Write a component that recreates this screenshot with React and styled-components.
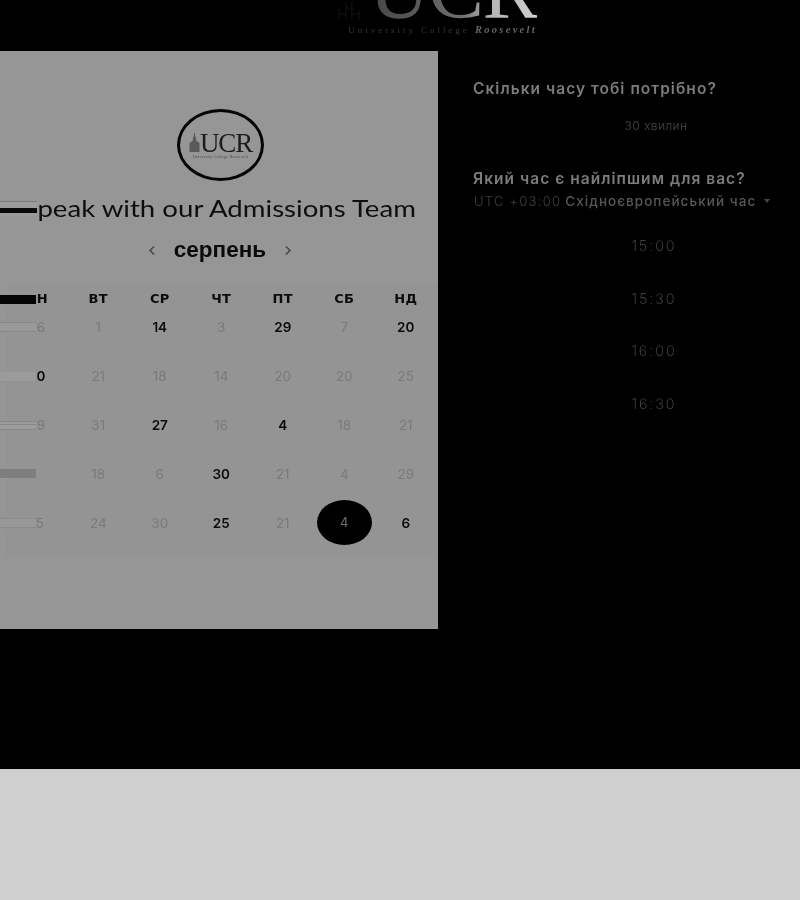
import React from "react";
import styled, { createGlobalStyle } from "styled-components";

const Global = createGlobalStyle`
  html, body { margin: 0; padding: 0; background: #000; }
  #root { width: 800px; height: 900px; overflow: hidden; }
`;

const Page = styled.div`
  width: 800px;
  height: 900px;
  display: flex;
  flex-direction: column;
  overflow: hidden;
  background: #000;
`;

const Top = styled.header`
  height: 51px;
  flex: none;
  display: flex;
  flex-direction: column;
  align-items: flex-end;
  overflow: hidden;
  padding-right: 263px;
  filter: blur(0.6px);
`;

const TopMark = styled.div`
  display: flex;
  align-items: flex-end;
  margin-top: -52px;
  height: 72px;
  svg { margin-right: 9px; }
`;

const TopLetters = styled.div`
  font-family: "Liberation Serif", serif;
  font-size: 84px;
  line-height: 84px;
  height: 72px;
  letter-spacing: -1.5px;
  background: linear-gradient(90deg, #454545 0%, #6e6e6e 55%, #b4b4b4 72%, #cfcfcf 100%);
  -webkit-background-clip: text;
  background-clip: text;
  color: transparent;
`;

const TopCaption = styled.div`
  margin-top: 4px;
  font-family: "Liberation Serif", serif;
  font-size: 9px;
  line-height: 12px;
  letter-spacing: 2.95px;
  color: #363636;
  white-space: nowrap;
  em { color: #666; letter-spacing: 2.3px; font-size: 10.5px; font-weight: 700; }
`;

const Main = styled.main`
  height: 718px;
  flex: none;
  display: flex;
  align-items: flex-start;
`;

const Panel = styled.section`
  width: 438px;
  height: 578px;
  flex: none;
  background: #969696;
  display: flex;
  flex-direction: column;
  align-items: center;
  padding-top: 58px;
  box-sizing: border-box;
  color: #000;
  filter: blur(0.4px);
`;

const Badge = styled.div`
  width: 87px;
  height: 72px;
  margin-left: 3px;
  box-sizing: border-box;
  border: 3px solid #050505;
  border-radius: 50%;
  display: flex;
  align-items: center;
  justify-content: center;
  flex-direction: column;
`;

const BadgeMark = styled.div`
  display: flex;
  align-items: flex-end;
  gap: 0;
  font-family: "Liberation Serif", serif;
  font-size: 27px;
  line-height: 24px;
  letter-spacing: -1.2px;
  color: #1c1c1c;
  svg { margin-bottom: 3px; }
`;

const BadgeCaption = styled.div`
  font-family: "Liberation Serif", serif;
  font-size: 4px;
  line-height: 4px;
  letter-spacing: 0.3px;
  color: #4a4a4a;
  white-space: nowrap;
`;

const Title = styled.h1`
  position: relative;
  margin: 12px 0 0;
  width: 438px;
  text-align: right;
  padding-right: 22px;
  box-sizing: border-box;
  font-family: "Lato", sans-serif;
  font-weight: 400;
  font-size: 24px;
  line-height: 30px;
  color: #0e0e0e;
  white-space: nowrap;
`;

const TitleText = styled.span`
  display: inline-block;
  transform: scaleX(1.15);
  transform-origin: right center;
`;

const TitleMask = styled.span`
  position: absolute;
  left: 0;
  top: 0;
  width: 37px;
  height: 30px;
  background: linear-gradient(
    #969696 0 8px,
    #7c7c7c 8px 9px,
    #9c9c9c 9px 15px,
    #0a0a0a 15px 20px,
    #9a9a9a 20px 23px,
    #969696 23px
  );
`;

const Month = styled.div`
  margin-top: 14px;
  display: flex;
  align-items: center;
  gap: 18px;
  font-family: "Liberation Sans", sans-serif;
  font-weight: 700;
  font-size: 22.5px;
  line-height: 26px;
  color: #0a0a0a;
  padding-left: 2px;
  svg { color: #4a4a4a; }
`;

const Grid = styled.div`
  margin-top: 22px;
  margin-left: 6px;
  width: 432px;
  display: grid;
  grid-template-columns: repeat(7, 61.5px);
  grid-template-rows: 28px repeat(5, 49px);
  background: #949494;
`;

const Weekday = styled.div`
  position: relative;
  line-height: 28px;
  text-align: center;
  font-family: "DejaVu Sans", sans-serif;
  font-weight: 700;
  font-size: 13px;
  letter-spacing: 0.3px;
  color: #0c0c0c;
`;

const Day = styled.div`
  position: relative;
  text-align: center;
  line-height: 28px;
  font-family: "Inter", sans-serif;
  font-size: 13.5px;
  font-weight: ${p => (p.$on ? 600 : 400)};
  color: ${p => (p.$on ? "#0a0a0a" : "#7a7a7a")};
`;

const Selected = styled.span`
  width: 55px;
  height: 45px;
  margin: -9px auto 0;
  padding-bottom: 2px;
  box-sizing: border-box;
  border-radius: 50%;
  background: #000;
  color: #6e6e6e;
  display: flex;
  align-items: center;
  justify-content: center;
  font-size: 13px;
  font-weight: 400;
`;

const Streak = styled.span`
  position: absolute;
  left: -6px;
  width: 36px;
  top: ${p => p.$top}px;
  height: ${p => p.$h}px;
  background: ${p => p.$bg};
`;

const Side = styled.aside`
  flex: none;
  width: 362px;
  box-sizing: border-box;
  padding: 29px 0 0 35px;
  filter: blur(0.3px);
`;

const Question = styled.h2`
  margin: 0;
  font-family: "Inter", sans-serif;
  font-size: 15.5px;
  line-height: 18px;
  font-weight: 600;
  color: #7c7c7c;
  white-space: nowrap;
  letter-spacing: 1.04px;
`;

const Duration = styled.div`
  margin: 21px 0 37px;
  width: 362px;
  padding-left: 4px;
  box-sizing: border-box;
  text-align: center;
  font-family: "Inter", sans-serif;
  font-size: 12px;
  line-height: 14px;
  letter-spacing: 0.35px;
  color: #3a3a3a;
`;

const Zone = styled.div`
  margin-top: 5px;
  display: flex;
  align-items: center;
  font-family: "Inter", sans-serif;
  font-size: 13.5px;
  font-weight: 500;
  line-height: 16px;
  white-space: nowrap;
  color: #585858;
  letter-spacing: 1.05px;
  b { font-weight: 300; font-size: 13px; color: #404040; margin: 0 4px 0 1px; letter-spacing: 1.25px; }
  svg { margin-left: 8px; color: #444; }
`;

const Times = styled.div`
  width: 362px;
  margin-top: 11px;
  display: flex;
  flex-direction: column;
  align-items: center;
  box-sizing: border-box;
`;

const Time = styled.div`
  height: 52.5px;
  line-height: 52.5px;
  font-family: "Inter", sans-serif;
  font-weight: 200;
  font-size: 14.5px;
  letter-spacing: 1.95px;
  color: #525252;
`;

const Foot = styled.footer`
  flex: 1;
  background: #cfcfcf;
`;

const Chevron = ({ left }) => (
  <svg width="8" height="11" viewBox="0 0 8 11" fill="none" stroke="currentColor" strokeWidth="1.7">
    <path d={left ? "M6 1.5 2 5.5l4 4" : "M2 1.5l4 4-4 4"} />
  </svg>
);

const Building = () => (
  <svg width="11" height="19" viewBox="0 0 9 17" fill="#5a5a5a">
    <path d="M4 0h1v3l1 1v3l3 2v8H0V9l3-2V4l1-1z" />
  </svg>
);

const Tower = () => (
  <svg width="22" height="20" viewBox="0 0 22 20" fill="none" stroke="#121212">
    <path d="M1 20V8M8 20V2M14 20V2M21 20V10M8 8h6M1 14h7M14 14h7" />
  </svg>
);

const weekdays = ["ПН", "ВТ", "СР", "ЧТ", "ПТ", "СБ", "НД"];
const weeks = [
  [["26"], ["1"], ["14", 1], ["3"], ["29", 1], ["7"], ["20", 1]],
  [["20", 1], ["21"], ["18"], ["14"], ["20"], ["20"], ["25"]],
  [["29"], ["31"], ["27", 1], ["16"], ["4", 1], ["18"], ["21"]],
  [[""], ["18"], ["6"], ["30", 1], ["21"], ["4"], ["29"]],
  [["15"], ["24"], ["30"], ["25", 1], ["21"], ["4", 2], ["6", 1]],
];
const streaks = [
  { $top: 7, $h: 14, $bg: "linear-gradient(#949494 0 2px,#888 2px 3px,#999 3px 11px,#888 11px 12px,#949494 12px)" },
  { $top: 8, $h: 13, $bg: "linear-gradient(#949494 0 2px,#9b9b9b 2px 11px,#949494 11px)" },
  { $top: 8, $h: 13, $bg: "linear-gradient(#949494 0 2px,#868686 2px 3px,#9c9c9c 3px 5px,#868686 5px 6px,#9c9c9c 6px 10px,#868686 10px 11px,#949494 11px)" },
  { $top: 9, $h: 9, $bg: "#7e7e7e" },
  { $top: 7, $h: 14, $bg: "linear-gradient(#949494 0 2px,#8c8c8c 2px 3px,#989898 3px 11px,#8c8c8c 11px 12px,#949494 12px)" },
];
const times = ["15:00", "15:30", "16:00", "16:30"];

export default function App() {
  return (
    <Page>
      <Global />
      <Top>
        <TopMark>
          <Tower />
          <TopLetters>UCR</TopLetters>
        </TopMark>
        <TopCaption>University College <em><i>Roosevelt</i></em></TopCaption>
      </Top>
      <Main>
        <Panel>
          <Badge>
            <BadgeMark><Building />UCR</BadgeMark>
            <BadgeCaption>University College Roosevelt</BadgeCaption>
          </Badge>
          <Title>
            <TitleText>Speak with our Admissions Team</TitleText>
            <TitleMask />
          </Title>
          <Month>
            <Chevron left />
            <span>серпень</span>
            <Chevron />
          </Month>
          <Grid>
            {weekdays.map((d, i) => (
              <Weekday key={d}>
                {d}
                {i === 0 && <Streak $top={8} $h={12} $bg="linear-gradient(#949494 0 2px,#050505 2px 11px,#949494 11px)" />}
              </Weekday>
            ))}
            {weeks.flatMap((week, w) =>
              week.map(([n, kind], i) => (
                <Day key={`${w}-${i}`} $on={kind === 1}>
                  {kind === 2 ? <Selected>{n}</Selected> : n}
                  {i === 0 && <Streak {...streaks[w]} />}
                </Day>
              ))
            )}
          </Grid>
        </Panel>
        <Side>
          <Question>Скільки часу тобі потрібно?</Question>
          <Duration>30 хвилин</Duration>
          <Question>Який час є найліпшим для вас?</Question>
          <Zone>
            <b>UTC +03:00</b>Східноєвропейський час
            <svg width="6" height="4" viewBox="0 0 6 4" fill="currentColor"><path d="M0 0h6L3 4z" /></svg>
          </Zone>
          <Times>
            {times.map(t => <Time key={t}>{t}</Time>)}
          </Times>
        </Side>
      </Main>
      <Foot />
    </Page>
  );
}
